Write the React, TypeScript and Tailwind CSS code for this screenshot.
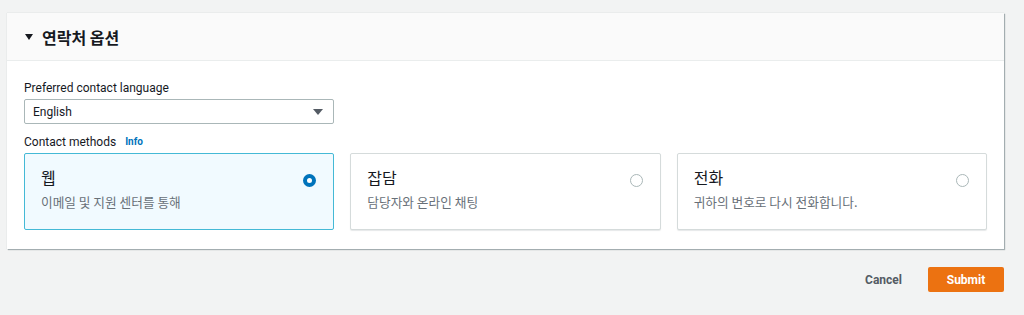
import React from "react";

const font = { fontFamily: 'Roboto, "Noto Sans CJK KR", sans-serif' };

function Tile({ title, desc, selected }: { title: string; desc: string; selected?: boolean }) {
  return (
    <div
      className={
        "h-[77px] px-[16px] pt-[12px] rounded-[2px] flex justify-between " +
        (selected ? "border border-[#44b9d6] bg-[#f1faff]" : "border border-[#d5dbdb] bg-white shadow-[0_1px_1px_rgba(0,28,36,0.1)]")
      }
    >
      <div>
        <div className="text-[16px] leading-[22px] text-[#16191f]" style={{ fontFamily: '"Noto Sans CJK KR", sans-serif' }}>{title}</div>
        <div className="mt-[5px] text-[12.7px] leading-[18px] text-[#687078]" style={{ fontFamily: '"Noto Sans CJK KR", sans-serif' }}>{desc}</div>
      </div>
      <div className="pt-[8px] pr-[1px]">
        {selected ? (
          <div className="w-[13px] h-[13px] rounded-full border-[4px] border-[#0073bb] bg-white" />
        ) : (
          <div className="w-[13px] h-[13px] rounded-full border border-[#aab7b8] bg-white" />
        )}
      </div>
    </div>
  );
}

export default function App() {
  return (
    <div className="w-[1024px] h-[315px] bg-[#f2f3f3] pt-[13px] overflow-hidden" style={font}>
      <div className="ml-[7px] w-[997px] bg-white shadow-[1px_1px_1px_rgba(0,28,36,0.3),0_0_1px_rgba(0,28,36,0.2)]">
        <div className="h-[48px] bg-[#fafafa] border-b border-[#eaeded] flex items-center pl-[18px]">
          <svg width="8" height="8" viewBox="0 0 8 8" className="mr-[9px] mt-[1px]">
            <polygon points="0,1 8,1 4,7" fill="#16191f" />
          </svg>
          <span className="text-[16px] font-bold text-[#16191f]" style={{ fontFamily: '"Noto Sans CJK KR", sans-serif' }}>연락처 옵션</span>
        </div>
        <div className="px-[17px] pt-[18px] pb-[19px]">
          <div className="text-[12px] leading-[18px] text-[#16191f]">Preferred contact language</div>
          <div className="mt-[2px] w-[310px] h-[25px] border border-[#aab7b8] rounded-[2px] flex items-center justify-between pl-[8px] pr-[10px]">
            <span className="text-[12px] text-[#16191f]">English</span>
            <svg width="10" height="8" viewBox="0 0 10 8">
              <polygon points="0,1 10,1 5,7" fill="#545b64" />
            </svg>
          </div>
          <div className="mt-[9px] flex items-center gap-[9px] text-[12px] leading-[18px]">
            <span className="text-[#16191f]">Contact methods</span>
            <span className="text-[#0073bb] font-bold text-[10px]">Info</span>
          </div>
          <div className="mt-[2px] grid grid-cols-3 gap-[16px]">
            <Tile title="웹" desc="이메일 및 지원 센터를 통해" selected />
            <Tile title="잡담" desc="담당자와 온라인 채팅" />
            <Tile title="전화" desc="귀하의 번호로 다시 전화합니다." />
          </div>
        </div>
      </div>
      <div className="w-[1004px] flex justify-end items-center mt-[18px] gap-[10px]">
        <button className="px-[16px] h-[25px] text-[12px] font-bold text-[#545b64]">Cancel</button>
        <button className="w-[76px] h-[25px] rounded-[2px] bg-[#ec7211] text-white text-[12px] font-bold">Submit</button>
      </div>
    </div>
  );
}
